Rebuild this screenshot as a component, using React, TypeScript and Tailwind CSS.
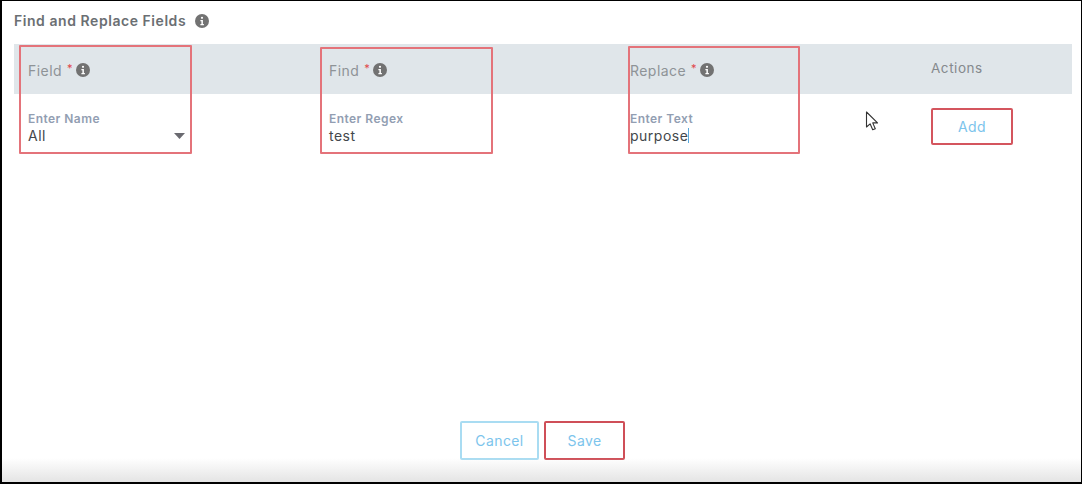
import React from 'react';

const font = { fontFamily: 'Inter, "Noto Sans", sans-serif' };

const InfoIcon = () => (
  <svg width="14" height="14" viewBox="0 0 14 14" className="shrink-0">
    <circle cx="7" cy="7" r="7" fill="#727272" />
    <circle cx="7" cy="3.8" r="1.1" fill="#fff" />
    <path d="M5.4 6h2.5v4h1v1.2H5.4V10h1V7.2h-1z" fill="#fff" />
  </svg>
);

// red review marks drawn over the screenshot
const Mark = ({ className }: { className: string }) => (
  <div className={`absolute border-2 border-[#e4737a] rounded-[1px] pointer-events-none ${className}`} />
);

const HeadCell = ({ label }: { label: string }) => (
  <div className="flex items-center pl-[14px] pt-[2px]">
    <span className="text-[14px] tracking-[0.45px] text-[#8e9397]">{label}</span>
    <span className="text-[#e0474c] text-[11px] leading-none ml-[5px] mb-[3px]">*</span>
    <span className="ml-[3px]">
      <InfoIcon />
    </span>
  </div>
);

const FieldCell = ({ label, value, caret, select }: { label: string; value: string; caret?: boolean; select?: boolean }) => (
  <div className="pl-[14px] pt-[17px]">
    <div className="text-[12px] leading-[15px] font-semibold tracking-[0.45px] text-[#929eb2]">{label}</div>
    <div className="flex items-center w-[157px] h-[18px] text-[14px] tracking-[0.5px] text-[#43474b]">
      <span>{value}</span>
      {caret && <span className="w-px h-[15px] bg-[#5aa9dc]" />}
      {select && (
        <svg width="11" height="6" viewBox="0 0 11 6" className="ml-auto mt-[2px]">
          <path d="M0 0h11L5.5 6z" fill="#6a6a70" />
        </svg>
      )}
    </div>
  </div>
);

const ActionButton = ({ label, className }: { label: string; className: string }) => (
  <button className={`flex items-center justify-center bg-white border-2 rounded-[2px] text-[14px] tracking-[0.4px] text-[#7cc4ec] ${className}`}>
    {label}
  </button>
);

const App: React.FC = () => {
  return (
    <div style={font} className="relative w-[1082px] h-[484px] bg-white overflow-hidden flex flex-col border-t border-l-2 border-r border-b-2 border-black">
      <div className="flex items-center h-[39px] pl-[12px]">
        <h2 className="text-[14px] font-semibold tracking-[0.55px] text-[#6b6f73]">Find and Replace Fields</h2>
        <span className="ml-[9px]">
          <InfoIcon />
        </span>
      </div>

      <div className="ml-[12px] mt-[4px] w-[1058px]">
        <div className="grid grid-cols-[301px_301px_301px_155px] h-[50px] bg-[#e0e6ea]">
          <HeadCell label="Field" />
          <HeadCell label="Find" />
          <HeadCell label="Replace" />
          <div className="flex items-center pl-[14px] pb-[2px] text-[13.5px] tracking-[0.55px] text-[#85898d]">Actions</div>
        </div>
        <div className="grid grid-cols-[301px_301px_301px_155px]">
          <FieldCell label="Enter Name" value="All" select />
          <FieldCell label="Enter Regex" value="test" />
          <FieldCell label="Enter Text" value="purpose" caret />
          <div className="pt-[14px] pl-[14px]">
            <ActionButton label="Add" className="w-[82px] h-[37px] border-[#d4555e]" />
          </div>
        </div>
      </div>

      <div className="mt-auto mb-[22px] flex justify-center gap-[5px] pl-[2px]">
        <ActionButton label="Cancel" className="w-[79px] h-[39px] border-[#a9dcf2]" />
        <ActionButton label="Save" className="w-[81px] h-[39px] border-[#cf4f58]" />
      </div>

      <div className="absolute left-0 right-0 bottom-0 h-[24px] bg-gradient-to-b from-transparent to-[#e4e4e4] pointer-events-none" />

      <Mark className="left-[17px] top-[44px] w-[173px] h-[109px]" />
      <Mark className="left-[318px] top-[46px] w-[173px] h-[107px]" />
      <Mark className="left-[626px] top-[45px] w-[172px] h-[108px]" />

      <svg width="14" height="20" viewBox="0 0 14 20" className="absolute left-[863px] top-[110px]">
        <path d="M1.5 1v15l3.6-3.2 2.6 6 2.6-1.1-2.6-5.8h4.8z" fill="#fff" stroke="#333" strokeWidth="1.1" strokeLinejoin="round" />
      </svg>
    </div>
  );
};

export default App;
